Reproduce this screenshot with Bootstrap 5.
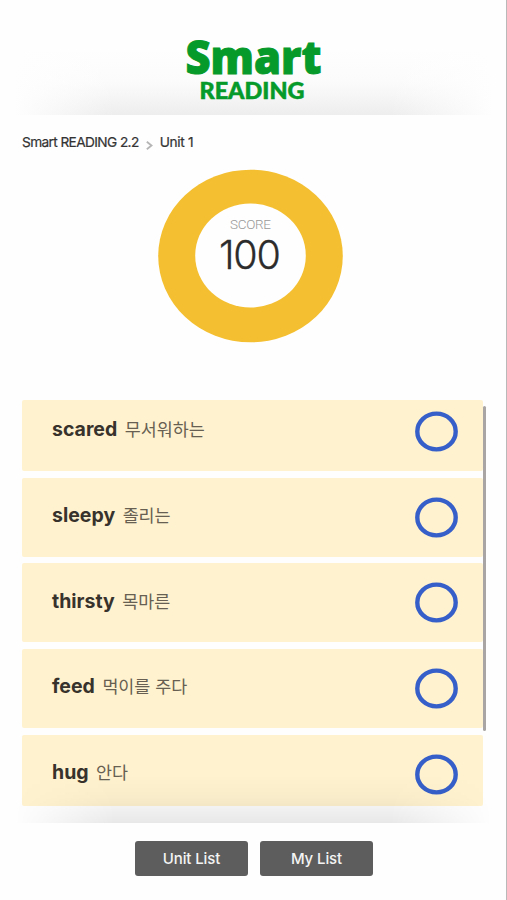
<!DOCTYPE html>
<html lang="ko">
<head>
<meta charset="utf-8">
<meta name="viewport" content="width=device-width, initial-scale=1">
<title>Smart READING</title>
<link rel="stylesheet" href="https://cdn.jsdelivr.net/npm/bootstrap@5.3.0/dist/css/bootstrap.min.css">
<style>
body{font-family:Inter,"Noto Sans CJK KR",sans-serif;background:#fefefe;color:#333;height:900px;overflow:hidden}
.screen{height:900px;border-right:1px solid #b9b9b9}
.brand-head{height:115px;padding-top:30px;background:linear-gradient(90deg,#fefefe 15px,rgba(254,254,254,0) 115px,rgba(254,254,254,0) 390px,#fefefe 492px),linear-gradient(#fefefe 50px,#fbfbfb 82px,#f5f5f5 98px,#ededed 115px)}
.crumbs{height:54px;padding:0 22px;font-size:13.7px;line-height:54px;letter-spacing:-.62px;-webkit-text-stroke:.2px #333}
.crumbs svg{margin:26px 7px 0}
.crumbs .unit{letter-spacing:-.3px}
.score{height:231px}
.words{height:406px;width:461px;margin-left:22px;gap:6.6px}
.word-row{height:79.1px;background:#fff2cf;border-radius:2px;padding:0 25px 0 30px}
.word-row:first-child,.word-row:last-child{height:71px}
.label-line{padding-top:25.5px}
.ring{margin-top:19px}
.word-row:first-child .label-line{padding-top:17px}
.word-row:first-child .ring{margin-top:11px}
.en{font-weight:700;font-size:19.5px;line-height:24px;color:#38322c}
.ko{font-family:"Noto Sans CJK KR",sans-serif;font-weight:400;font-size:17.4px;line-height:24px;color:#675f52;margin-left:7.5px}
.shade{left:0;right:0;bottom:0;height:48px;background:linear-gradient(transparent,rgba(0,0,0,.025) 22px,rgba(0,0,0,.085));-webkit-mask-image:linear-gradient(90deg,transparent 15px,#000 115px,#000 390px,transparent 492px);mask-image:linear-gradient(90deg,transparent 15px,#000 115px,#000 390px,transparent 492px)}
.list-zone{height:423px}
.thumb{left:483px;top:6px;width:3px;height:325px;background:#aaa5a5;border-radius:1.5px}
.actions{padding-top:18px;gap:12px;padding-left:2px}
.btn-act{width:113px;height:35px;padding:0;background:#5d5d5d;color:#f4f4f4;border:0;border-radius:3px;font-size:15px;font-weight:500;line-height:31px;letter-spacing:-.1px}
</style>
</head>
<body>
<div class="screen d-flex flex-column">
  <header class="brand-head">
    <svg class="d-block" overflow="visible" width="506" height="80" viewBox="0 30 506 80" font-weight="900" fill="#069a2a" stroke="#069a2a" role="img" aria-label="Smart READING">
      <text x="185.5" y="74.3" font-family="'Noto Sans',sans-serif" font-size="45.5" stroke-width="1" textLength="136" lengthAdjust="spacingAndGlyphs">Smart</text>
      <text x="199.5" y="98.5" font-family="Lato,sans-serif" font-size="22" stroke-width=".5" textLength="105" lengthAdjust="spacingAndGlyphs">READING</text>
    </svg>
  </header>
  <nav class="crumbs d-flex">
    <span>Smart READING 2.2</span>
    <svg width="7" height="9" viewBox="0 0 7 9" fill="none" stroke="#b5b5b5" stroke-width="1.8"><path d="M.8.8 5.5 4.5.8 8.2"/></svg>
    <span class="unit">Unit 1</span>
  </nav>
  <section class="score">
    <svg class="d-block" width="506" height="231" viewBox="0 169 506 231" text-anchor="middle">
      <ellipse cx="250.5" cy="256" rx="92.3" ry="86.3" fill="#f4bf30"/>
      <ellipse cx="250.5" cy="255.5" rx="55.3" ry="52" fill="#fefefe"/>
      <text x="250.5" y="229" font-family="Roboto,sans-serif" font-weight="300" font-size="13.5" textLength="41" fill="#999">SCORE</text>
      <text x="250" y="268.5" font-family="Inter,sans-serif" font-weight="300" font-size="39.5" textLength="62" stroke="#2c2c2c" stroke-width=".3" fill="#2c2c2c">100</text>
    </svg>
  </section>
  <main class="list-zone position-relative">
    <div class="words d-flex flex-column overflow-hidden" id="words"></div>
    <div class="shade position-absolute"></div>
    <div class="thumb position-absolute"></div>
  </main>
  <footer class="actions d-flex justify-content-center">
    <button class="btn btn-act">Unit List</button>
    <button class="btn btn-act">My List</button>
  </footer>
</div>
<script src="https://cdn.jsdelivr.net/npm/bootstrap@5.3.0/dist/js/bootstrap.bundle.min.js"></script>
<script>
const words=[["scared","무서워하는"],["sleepy","졸리는"],["thirsty","목마른"],["feed","먹이를 주다"],["hug","안다"]];
document.getElementById("words").innerHTML=words.map(([en,ko])=>`
<div class="word-row d-flex justify-content-between align-items-start flex-shrink-0">
  <div class="label-line d-flex align-items-center"><span class="en">${en}</span><span class="ko">${ko}</span></div>
  <svg class="ring" width="43" height="41" viewBox="0 0 43 41"><ellipse cx="21.5" cy="20.5" rx="19.2" ry="17.9" fill="none" stroke="#365fc9" stroke-width="4.4"/></svg>
</div>`).join("");
</script>
</body>
</html>
